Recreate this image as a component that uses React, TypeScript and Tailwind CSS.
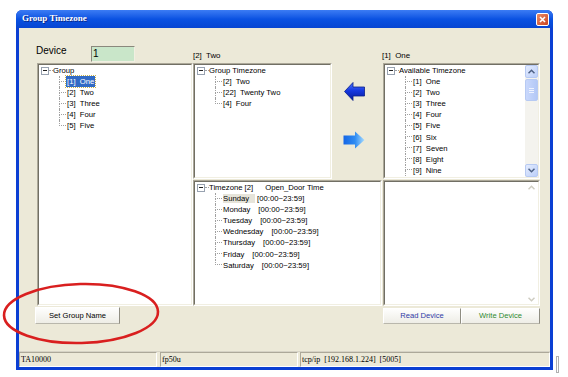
import React from 'react';

type TreeItem = { label: React.ReactNode; selected?: boolean; inactive?: boolean };

const Expander: React.FC = () => (
  <span className="flex h-[8px] w-[8px] shrink-0 items-center justify-center border border-[#98a2b0] bg-white">
    <span className="h-px w-[4px] bg-[#202020]" />
  </span>
);

// XP style tree with dotted connector lines
const TreeView: React.FC<{ root: React.ReactNode; items: TreeItem[]; more?: boolean }> = ({ root, items, more }) => (
  <div className="pt-0 text-[7.7px] leading-[11.1px] text-black">
    <div className="flex h-[11.1px] items-center pl-[2px]">
      <Expander />
      <span className="w-[4px] border-t border-dotted border-[#a0a0a0]" />
      <span className="whitespace-pre">{root}</span>
    </div>
    {items.map((item, i) => {
      const last = i === items.length - 1 && !more;
      return (
        <div key={i} className="ml-[20px] flex h-[11.1px]">
          <div className="flex w-[7px] shrink-0 flex-col">
            <div className="h-1/2 border-b border-l border-dotted border-[#a0a0a0]" />
            {!last && <div className="flex-1 border-l border-dotted border-[#a0a0a0]" />}
          </div>
          <span
            className={`whitespace-pre px-[1px] ${
              item.selected ? 'bg-[#316ac5] text-white outline outline-1 outline-dotted outline-[#c9b24a]' : ''
            }`}
          >
            {item.label}
          </span>
        </div>
      );
    })}
  </div>
);

const Sunken: React.FC<{ className?: string; children?: React.ReactNode }> = ({ className = '', children }) => (
  <div className={`border border-b-white border-l-[#aca899] border-r-white border-t-[#aca899] ${className}`}>
    <div className="flex h-full overflow-hidden border border-b-[#f1efe2] border-l-[#716f64] border-r-[#f1efe2] border-t-[#716f64] bg-white">
      {children}
    </div>
  </div>
);

const Chevron: React.FC<{ up?: boolean; color: string }> = ({ up, color }) => (
  <svg width="7" height="5" viewBox="0 0 7 5">
    <polyline
      points={up ? '0.5,4.2 3.5,1.2 6.5,4.2' : '0.5,0.8 3.5,3.8 6.5,0.8'}
      fill="none"
      stroke={color}
      strokeWidth="1.5"
    />
  </svg>
);

const ScrollButton: React.FC<{ up?: boolean }> = ({ up }) => (
  <div className="flex h-[13px] items-center justify-center rounded-[2px] border border-[#b7caf3] bg-gradient-to-br from-[#e4ecfe] to-[#bccff9]">
    <Chevron up={up} color="#4d6185" />
  </div>
);

const LeftArrow: React.FC = () => (
  <svg width="21" height="19" viewBox="0 0 21 19">
    <defs>
      <linearGradient id="la" x1="0" y1="0" x2="0" y2="1">
        <stop offset="0" stopColor="#4f78ff" />
        <stop offset="0.45" stopColor="#1638e0" />
        <stop offset="1" stopColor="#061a9a" />
      </linearGradient>
    </defs>
    <path d="M0.5 9.5 L9 0.5 L9 5 L20.5 5 L20.5 14 L9 14 L9 18.5 Z" fill="url(#la)" stroke="#0a1f8c" strokeWidth="0.8" />
  </svg>
);

const RightArrow: React.FC = () => (
  <svg width="22" height="18" viewBox="0 0 22 18">
    <defs>
      <linearGradient id="ra" x1="0" y1="0" x2="1" y2="0">
        <stop offset="0" stopColor="#1466e6" />
        <stop offset="0.55" stopColor="#2f8cf2" />
        <stop offset="1" stopColor="#a8dcff" />
      </linearGradient>
    </defs>
    <path d="M0.5 4.5 L12 4.5 L12 0.5 L21.5 9 L12 17.5 L12 13.5 L0.5 13.5 Z" fill="url(#ra)" />
  </svg>
);

const XpButton: React.FC<{ className?: string; children: React.ReactNode }> = ({ className = '', children }) => (
  <button
    className={`flex items-center justify-center border border-b-[#b9b7ac] border-l-white border-r-[#8f8d82] border-t-white bg-gradient-to-b from-[#fefefd] to-[#eeede6] text-[7.6px] ${className}`}
  >
    {children}
  </button>
);

const groups: TreeItem[] = [
  { label: '[1]  One', selected: true },
  { label: '[2]  Two' },
  { label: '[3]  Three' },
  { label: '[4]  Four' },
  { label: '[5]  Five' },
];

const groupTimezones: TreeItem[] = [{ label: '[2]  Two' }, { label: '[22]  Twenty Two' }, { label: '[4]  Four' }];

const available: TreeItem[] = ['One', 'Two', 'Three', 'Four', 'Five', 'Six', 'Seven', 'Eight', 'Nine'].map((n, i) => ({
  label: `[${i + 1}]  ${n}`,
}));

const days = ['Sunday', 'Monday', 'Tuesday', 'Wednesday', 'Thursday', 'Friday', 'Saturday'];

const dayItems: TreeItem[] = days.map((d, i) => ({
  label: (
    <>
      <span className={i === 0 ? 'bg-[#e6e4da] pr-[6px]' : 'pr-[6px]'}>{d}</span>
      <span className="ml-[2px]">[00:00~23:59]</span>
    </>
  ),
}));

export default function App() {
  return (
    <div className="relative h-[377px] w-[568px] overflow-hidden bg-white pl-[16px] pt-[10px] font-['Liberation_Sans',Arial,sans-serif]">
      {/* Window */}
      <div className="flex h-[360px] w-[537px] flex-col rounded-t-[6px] bg-[#0b3fd3]">
        <div className="flex h-[18px] items-center justify-between rounded-t-[6px] bg-gradient-to-b from-[#3b7cf4] via-[#0a52e2] to-[#0745d2] pl-[6px] pr-[4px]">
          <span className="font-['Liberation_Serif',serif] text-[9px] font-bold text-white [text-shadow:1px_1px_0_#0a2a8a]">
            Group Timezone
          </span>
          <div className="flex h-[13px] w-[13px] items-center justify-center rounded-[2px] border border-white bg-gradient-to-br from-[#eb8a66] to-[#c8431e]">
            <svg width="7" height="7" viewBox="0 0 7 7">
              <path d="M1 1 L6 6 M6 1 L1 6" stroke="white" strokeWidth="1.6" />
            </svg>
          </div>
        </div>

        <div className="mx-[3px] mb-[3px] flex flex-1 flex-col bg-[#ece9d8]">
          <div className="flex pl-[18px] pt-[17px]">
            {/* Column A */}
            <div className="flex w-[156px] flex-col">
              <div className="flex h-[18px] items-start">
                <span className="-ml-[1px] w-[55px] text-[10px] leading-[12px] text-black">Device</span>
                <div className="mt-[1px] h-[16px] w-[44px] border border-b-[#f1efe2] border-l-[#8a887c] border-r-[#f1efe2] border-t-[#8a887c] bg-[#c9e6c9] pl-[1px] text-[10px] leading-[14px]">
                  1
                </div>
              </div>
              <Sunken className="h-[243px] w-full">
                <TreeView root="Group" items={groups} />
              </Sunken>
              <XpButton className="-ml-[2px] mt-[1px] h-[17px] w-[85px]">Set Group Name</XpButton>
            </div>

            {/* Column B */}
            <div className="flex w-[189px] flex-col">
              <div className="flex h-[18px] items-end pb-[2px] text-[7.9px] leading-[10px] whitespace-pre">[2]  Two</div>
              <div className="flex h-[116px]">
                <Sunken className="h-full w-[139px]">
                  <TreeView root="Group Timezone" items={groupTimezones} />
                </Sunken>
                <div className="flex w-[50px] flex-col">
                  <div className="mt-[19px] pl-[12px]">
                    <LeftArrow />
                  </div>
                  <div className="mt-[30px] pl-[11px]">
                    <RightArrow />
                  </div>
                </div>
              </div>
              <Sunken className="mt-[1px] h-[126px] w-full">
                <TreeView
                  root={
                    <>
                      Timezone [2]<span className="ml-[12px]">Open_Door Time</span>
                    </>
                  }
                  items={dayItems}
                />
              </Sunken>
            </div>

            {/* Column C */}
            <div className="ml-[1px] flex w-[157px] flex-col">
              <div className="-ml-[1px] flex h-[18px] items-end pb-[2px] text-[7.9px] leading-[10px] whitespace-pre">[1]  One</div>
              <Sunken className="h-[116px] w-full">
                <div className="flex-1 overflow-hidden">
                  <TreeView root="Available Timezone" items={available} more />
                </div>
                <div className="flex w-[13px] flex-col bg-[#f4f3ee]">
                  <ScrollButton up />
                  <div className="mt-[1px] flex h-[22px] flex-col items-center justify-center gap-[1px] rounded-[2px] border border-[#b7caf3] bg-gradient-to-r from-[#c9d8fc] to-[#b3c8f6]">
                    <span className="h-px w-[5px] bg-[#eef3ff]" />
                    <span className="h-px w-[5px] bg-[#eef3ff]" />
                    <span className="h-px w-[5px] bg-[#eef3ff]" />
                  </div>
                  <div className="flex-1" />
                  <ScrollButton />
                </div>
              </Sunken>
              <Sunken className="mt-[1px] h-[126px] w-full">
                <div className="flex-1" />
                <div className="flex w-[13px] flex-col justify-between py-[3px] pb-[2px]">
                  <div className="flex justify-center">
                    <Chevron up color="#cfcdc2" />
                  </div>
                  <div className="flex justify-center">
                    <Chevron color="#cfcdc2" />
                  </div>
                </div>
              </Sunken>
              <div className="mt-[2px] flex h-[16px]">
                <XpButton className="h-full w-[78px] text-[#2f3aa6]">Read Device</XpButton>
                <XpButton className="h-full w-[79px] text-[#2f8a2f]">Write Device</XpButton>
              </div>
            </div>
          </div>

          {/* Status bar */}
          <div className="mt-auto flex h-[16px] border-t border-[#d6d3c6] font-['Liberation_Serif',serif] text-[8px] leading-[13px] text-black">
            <div className="w-[138px] border border-b-white border-l-[#aca899] border-r-white border-t-[#aca899] pl-[1px]">
              TA10000
            </div>
            <div className="ml-[3px] w-[138px] border border-b-white border-l-[#aca899] border-r-white border-t-[#aca899] pl-[1px]">
              fp50u
            </div>
            <div className="ml-[2px] flex-1 whitespace-pre border border-b-white border-l-[#aca899] border-r-white border-t-[#aca899] pl-[1px]">
              tcp/ip  [192.168.1.224]  [5005]
            </div>
          </div>
        </div>
      </div>

      {/* Resize grip fragment right of window */}
      <div className="absolute left-[556px] top-[356px] h-[17px] w-[3px] border border-[#b0b0b0]" />

      {/* Red annotation ellipse */}
      <svg className="pointer-events-none absolute left-0 top-0" width="568" height="377">
        <ellipse
          cx="81"
          cy="313.5"
          rx="77"
          ry="29.5"
          fill="none"
          stroke="#d91f1f"
          strokeWidth="2.6"
          transform="rotate(-1.4 81 313.5)"
        />
      </svg>
    </div>
  );
}
